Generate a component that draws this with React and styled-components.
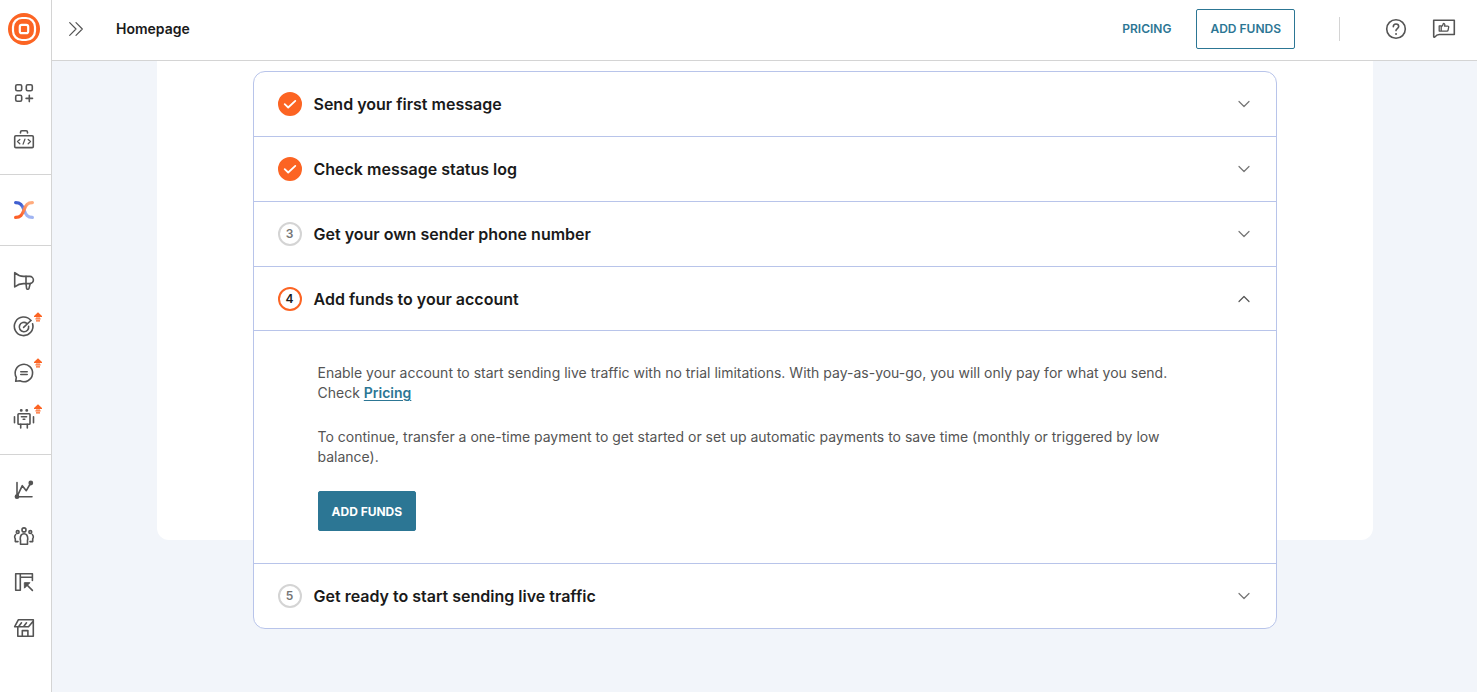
import { useState } from 'react';
import styled, { createGlobalStyle } from 'styled-components';

const GlobalStyle = createGlobalStyle`
  *, *::before, *::after {
    box-sizing: border-box;
  }
  body {
    margin: 0;
    background-color: #f2f5fa;
    color: #1a1a1a;
    font-family: Inter, sans-serif;
    font-size: 14px;
    line-height: 20px;
  }
  button {
    font-family: inherit;
    cursor: pointer;
  }
`;

const Shell = styled.div`
  display: flex;
  min-height: 100vh;
`;

const Sidebar = styled.nav`
  flex: 0 0 52px;
  background-color: #fff;
  border-right: 1px solid #d4d4d4;
`;

const LogoLink = styled.a`
  display: grid;
  place-items: center;
  width: 48px;
  height: 58px;
`;

const NavGroup = styled.div`
  padding: 12px 0;
  border-bottom: 1px solid #d4d4d4;
  &:last-child {
    border-bottom: none;
  }
`;

const NavLink = styled.a`
  position: relative;
  display: grid;
  place-items: center;
  width: 48px;
  height: 46px;
`;

const Badge = styled.svg`
  position: absolute;
  top: 8px;
  right: 6px;
`;

const Main = styled.div`
  flex: 1;
  min-width: 0;
`;

const Header = styled.header`
  display: flex;
  align-items: center;
  height: 61px;
  padding: 0 21px 3px 12px;
  background-color: #fff;
  border-bottom: 1px solid #d4d4d4;
`;

const IconButton = styled.button`
  display: grid;
  place-items: center;
  width: 24px;
  height: 24px;
  padding: 0;
  border: none;
  background: none;
  & + & {
    margin-left: 24px;
  }
`;

const PageTitle = styled.h1`
  flex: 1;
  margin: 0 0 0 28px;
  font-size: 14px;
  font-weight: 600;
  line-height: 20px;
`;

const PricingLink = styled.a`
  margin-right: 25px;
  color: #2c7694;
  font-size: 12px;
  font-weight: 600;
  text-decoration: none;
`;

const Button = styled.button`
  height: 40px;
  padding: 0 13px;
  border: 1px solid #2c7694;
  border-radius: 2px;
  background-color: ${(props) => (props.$filled ? '#2c7694' : '#fff')};
  color: ${(props) => (props.$filled ? '#fff' : '#2c7694')};
  font-size: 12px;
  font-weight: ${(props) => (props.$filled ? 700 : 600)};
`;

const Separator = styled.span`
  width: 1px;
  height: 24px;
  margin: 0 44px;
  background-color: #d4d4d4;
`;

const Panel = styled.main`
  display: flex;
  flex-direction: column;
  max-width: 1216px;
  margin: 0 auto 152px;
  padding: 10px 96px 0;
  background-color: #fff;
  border-radius: 0 0 12px 12px;
`;

/* the card hangs over the bottom edge of the panel */
const Card = styled.div`
  margin-bottom: -89px;
  background-color: #fff;
  border: 1px solid #b8c4ea;
  border-radius: 12px;
`;

const Step = styled.section`
  & + & {
    border-top: 1px solid #b8c4ea;
  }
`;

const StepHeading = styled.h2`
  margin: 0;
`;

const StepToggle = styled.button`
  display: flex;
  align-items: center;
  gap: 12px;
  width: 100%;
  height: 64px;
  padding: 0 24px;
  border: none;
  border-bottom: ${(props) => (props.$open ? '1px solid #b8c4ea' : 'none')};
  background: none;
  color: #1a1a1a;
  text-align: left;
`;

const StepTitle = styled.span`
  flex: 1;
  font-size: 16px;
  font-weight: 600;
  line-height: 24px;
`;

const StepNumber = styled.span`
  display: grid;
  place-items: center;
  width: 24px;
  height: 24px;
  border: 2px solid ${(props) => (props.$status === 'todo' ? '#d4d4d4' : '#fc6423')};
  border-radius: 50%;
  background-color: ${(props) => (props.$status === 'done' ? '#fc6423' : '#fff')};
  color: ${(props) => (props.$status === 'todo' ? '#757575' : '#1a1a1a')};
  font-size: 12px;
  font-weight: 600;
  line-height: 20px;
`;

const StepBody = styled.div`
  padding: 32px 63px 32px 64px;
  color: #545454;
`;

const Paragraph = styled.p`
  margin: 0 0 24px;
`;

const TextLink = styled.a`
  color: #2c7694;
  font-weight: 600;
  text-underline-offset: 2px;
`;

const Icon = ({ children, size = 24, color = '#545454' }) => (
  <svg
    width={size}
    height={size}
    viewBox={`0 0 ${size} ${size}`}
    fill="none"
    stroke={color}
    strokeWidth="1.6"
    strokeLinecap="round"
    strokeLinejoin="round"
    aria-hidden="true"
  >
    {children}
  </svg>
);

const Logo = () => (
  <svg width="32" height="32" viewBox="0 0 32 32" fill="none" aria-hidden="true">
    <circle cx="16" cy="16" r="16" fill="#fc6423" />
    <rect x="5" y="5" width="22" height="22" rx="9" stroke="#fff" strokeWidth="2.2" />
    <rect x="11.8" y="11.8" width="8.4" height="8.4" rx="2" stroke="#fff" strokeWidth="2.2" />
  </svg>
);

const CrossLogo = () => (
  <svg width="24" height="24" viewBox="0 0 24 24" fill="none" aria-hidden="true">
    <defs>
      <linearGradient id="crossBlue" x1="3" y1="4" x2="21" y2="20" gradientUnits="userSpaceOnUse">
        <stop offset="0.25" stopColor="#3f5fd0" />
        <stop offset="0.65" stopColor="#a0b4f2" />
      </linearGradient>
      <linearGradient id="crossOrange" x1="3" y1="20" x2="21" y2="4" gradientUnits="userSpaceOnUse">
        <stop offset="0.25" stopColor="#fc6029" />
        <stop offset="0.8" stopColor="#ffab7d" />
      </linearGradient>
    </defs>
    <g strokeWidth="3.2" strokeLinecap="round">
      <path d="M3.6 4.6C8.5 4.6 10 7 12 12S15.5 19.4 20.4 19.4" stroke="url(#crossBlue)" />
      <path d="M3.6 19.4C8.5 19.4 10 17 12 12S15.5 4.6 20.4 4.6" stroke="url(#crossOrange)" />
    </g>
  </svg>
);

const icons = {
  apps: (
    <>
      <rect x="3.7" y="3.7" width="6" height="6" rx="1.5" />
      <rect x="14.3" y="3.7" width="6" height="6" rx="1.5" />
      <rect x="3.7" y="14.3" width="6" height="6" rx="1.5" />
      <path d="M17.3 14.2v6.4M14.1 17.4h6.4" />
    </>
  ),
  developer: (
    <>
      <rect x="2.7" y="8.7" width="18.6" height="11.9" rx="1.2" />
      <path d="M8.5 6V5.2c0-.8.6-1.4 1.4-1.4h4.2c.8 0 1.4.6 1.4 1.4V6" />
      <path d="M7.8 12.5 5.5 14.6l2.3 2.1M16.2 12.5l2.3 2.1-2.3 2.1M12.9 12.2l-1.8 4.9" strokeWidth="1.3" />
    </>
  ),
  campaigns: (
    <>
      <path d="M2.7 3.7v14.2c3-2.3 5.5-3.3 8.800-3.300h6.300a3.600 3.600 0 0 0 0-7.200h-6.300C8.200 7.400 5.700 6.300 2.700 3.700z" />
      <path d="M14 7.400v7.200M14 14.600l.6 4.700c.1.700.7 1.100 1.400 1 .5-.1.900-.4 1-.9l1.200-4.800" />
    </>
  ),
  target: (
    <>
      <path d="M18.900 5.500A9.300 9.300 0 1 0 20.600 8.800" />
      <path d="M14.800 8.300a4.700 4.700 0 1 0 1.800 2.900M11.600 12.400l7.300-6.900" />
    </>
  ),
  conversations: (
    <>
      <path d="M3.7 20.3l.6-4A8.700 8.700 0 1 1 8 19.800z" />
      <path d="M8.800 10.700h6.400M8.800 13.500h6.400" />
    </>
  ),
  answers: (
    <>
      <rect x="6" y="6.7" width="12" height="10.6" rx="0.8" />
      <path d="M2.500 9.800v6M21.500 9.800v6M8.700 17.300V21M15.300 17.300V21M9.400 9.700h5.200M11.200 12.300h1.600" />
      <path d="M9.200 3.400h.1M14.700 3.400h.1" strokeWidth="2.8" />
    </>
  ),
  analytics: (
    <>
      <path d="M5 4.500v14.200h15M5 18.700l5.300-11 4 5 4.400-7.700" />
      <circle cx="5" cy="18.7" r="1.6" fill="#545454" />
      <circle cx="18.8" cy="5" r="1.6" fill="#545454" />
    </>
  ),
  people: (
    <>
      <circle cx="12" cy="5.9" r="2" />
      <path d="M8.500 20.200v-4.400l-.3-.5c0-3.800 1-5.600 3.800-5.600s3.800 1.800 3.800 5.600l-.3.500v4.400z" />
      <circle cx="5.7" cy="8" r="1.4" />
      <circle cx="18.3" cy="8" r="1.4" />
      <path d="M6 17.600H3.300v-2.800c-1-1-.8-3.200.4-4.300M18 17.600h2.700v-2.800c1-1 .8-3.200-.4-4.300" />
    </>
  ),
  content: (
    <>
      <path d="M8.300 3.800v16.500H3.700V3.800h16.700v6.700M8.300 7.300h12.100M13.500 13.500l6.900 6.900" />
      <path d="M12.700 12.700h5.200l-5.200 5.200z" fill="#545454" strokeWidth="1" />
    </>
  ),
  store: (
    <>
      <path d="M5.800 10.800v9.500h15.500V3.800H6.300L2.700 10.700h3.800l3-3.900-3 3.900h5l3-3.900-3 3.900h5l4.200-5" />
      <path d="M10.300 20.300v-5.700h5.600v5.700" />
    </>
  ),
};

const navGroups = [
  [{ id: 'apps', label: 'Apps' }, { id: 'developer', label: 'Developer tools' }],
  [{ id: 'cross', label: 'Experience' }],
  [
    { id: 'campaigns', label: 'Campaigns' },
    { id: 'target', label: 'Engagement', upgrade: true },
    { id: 'conversations', label: 'Conversations', upgrade: true },
    { id: 'answers', label: 'Chatbots', upgrade: true },
  ],
  [
    { id: 'analytics', label: 'Analytics' },
    { id: 'people', label: 'People' },
    { id: 'content', label: 'Content' },
    { id: 'store', label: 'Store' },
  ],
];

const steps = [
  { id: 1, title: 'Send your first message', status: 'done' },
  { id: 2, title: 'Check message status log', status: 'done' },
  { id: 3, title: 'Get your own sender phone number', status: 'todo' },
  { id: 4, title: 'Add funds to your account', status: 'current' },
  { id: 5, title: 'Get ready to start sending live traffic', status: 'todo' },
];

const UpgradeBadge = () => (
  <Badge width="8" height="10" viewBox="0 0 8 10" fill="#fc6423" aria-hidden="true">
    <path d="M4 .3 8 4v1H0V4zM2 5h4v.6H2zM1.500 6.200h5v1.200h-5zM2 8.200h4v1.200H2z" />
  </Badge>
);

const Navigation = () => (
  <Sidebar aria-label="Main">
    <LogoLink href="#home" aria-label="Home">
      <Logo />
    </LogoLink>
    {navGroups.map((group) => (
      <NavGroup key={group[0].id}>
        {group.map((item) => (
          <NavLink key={item.id} href={`#${item.id}`} aria-label={item.label}>
            {item.id === 'cross' ? <CrossLogo /> : <Icon>{icons[item.id]}</Icon>}
            {item.upgrade && <UpgradeBadge />}
          </NavLink>
        ))}
      </NavGroup>
    ))}
  </Sidebar>
);

const StepItem = ({ step, open, onToggle, children }) => (
  <Step>
    <StepHeading>
      <StepToggle $open={open} aria-expanded={open} onClick={onToggle}>
        <StepNumber $status={step.status}>
          {step.status === 'done' ? (
            <svg width="14" height="14" viewBox="0 0 14 14" fill="none" stroke="#fff" strokeWidth="1.8" strokeLinecap="round" strokeLinejoin="round">
              <path d="M1.7 7.2 5.2 10.5 12.3 3.9" />
            </svg>
          ) : (
            step.id
          )}
        </StepNumber>
        <StepTitle>{step.title}</StepTitle>
        <Icon size={16} color={open ? '#545454' : '#757575'}>
          <path d={open ? 'M3 10.5 8 5.5l5 5' : 'M3 5.5l5 5 5-5'} strokeWidth="1.2" />
        </Icon>
      </StepToggle>
    </StepHeading>
    {open && children}
  </Step>
);

const App = () => {
  const [openStep, setOpenStep] = useState(4);

  const handleToggle = (id) => () => {
    setOpenStep(openStep === id ? null : id);
  };

  return (
    <>
      <GlobalStyle />
      <Shell>
        <Navigation />
        <Main>
          <Header>
            <IconButton aria-label="Expand menu">
              <Icon>
                <path d="M5.7 5.7 12 12l-6.3 6.3M12 5.7 18.3 12 12 18.3" strokeWidth="1.2" />
              </Icon>
            </IconButton>
            <PageTitle>Homepage</PageTitle>
            <PricingLink href="#pricing">PRICING</PricingLink>
            <Button>ADD FUNDS</Button>
            <Separator />
            <IconButton aria-label="Help">
              <Icon>
                <circle cx="12" cy="12" r="9.3" />
                <path d="M9.300 9.700c0-1.500 1.200-2.700 2.700-2.700s2.700 1.100 2.700 2.600c0 1.900-2.700 2.100-2.700 4" />
                <path d="M12 17h.1" strokeWidth="1.8" />
              </Icon>
            </IconButton>
            <IconButton aria-label="Feedback">
              <Icon>
                <path d="M1.700 3.300h20.600v14.200H7.200c-1.800 0-3.200 1-4.200 2.400-.5.700-1.300.4-1.300-.4z" />
                <path d="M7.200 8.900h2v5.200h-2zM9.200 9.700c1.200-.7 1.900-1.700 2.100-3.100.9-.3 1.700.5 1.500 1.500l-.3 1h3.300c.6 0 1 .4.900 1l-.6 3c-.1.600-.5 1-1.100 1H9.200" strokeWidth="1.3" />
              </Icon>
            </IconButton>
          </Header>
          <Panel>
            <Card>
              {steps.map((step) => (
                <StepItem
                  key={step.id}
                  step={step}
                  open={openStep === step.id}
                  onToggle={handleToggle(step.id)}
                >
                  {step.id === 4 && (
                    <StepBody>
                      <Paragraph>
                        Enable your account to start sending live traffic with no trial limitations.
                        With pay-as-you-go, you will only pay for what you send.
                        <br />
                        Check <TextLink href="#pricing">Pricing</TextLink>
                      </Paragraph>
                      <Paragraph>
                        To continue, transfer a one-time payment to get started or set up automatic
                        payments to save time (monthly or triggered by low balance).
                      </Paragraph>
                      <Button $filled>ADD FUNDS</Button>
                    </StepBody>
                  )}
                </StepItem>
              ))}
            </Card>
          </Panel>
        </Main>
      </Shell>
    </>
  );
};

export default App;
